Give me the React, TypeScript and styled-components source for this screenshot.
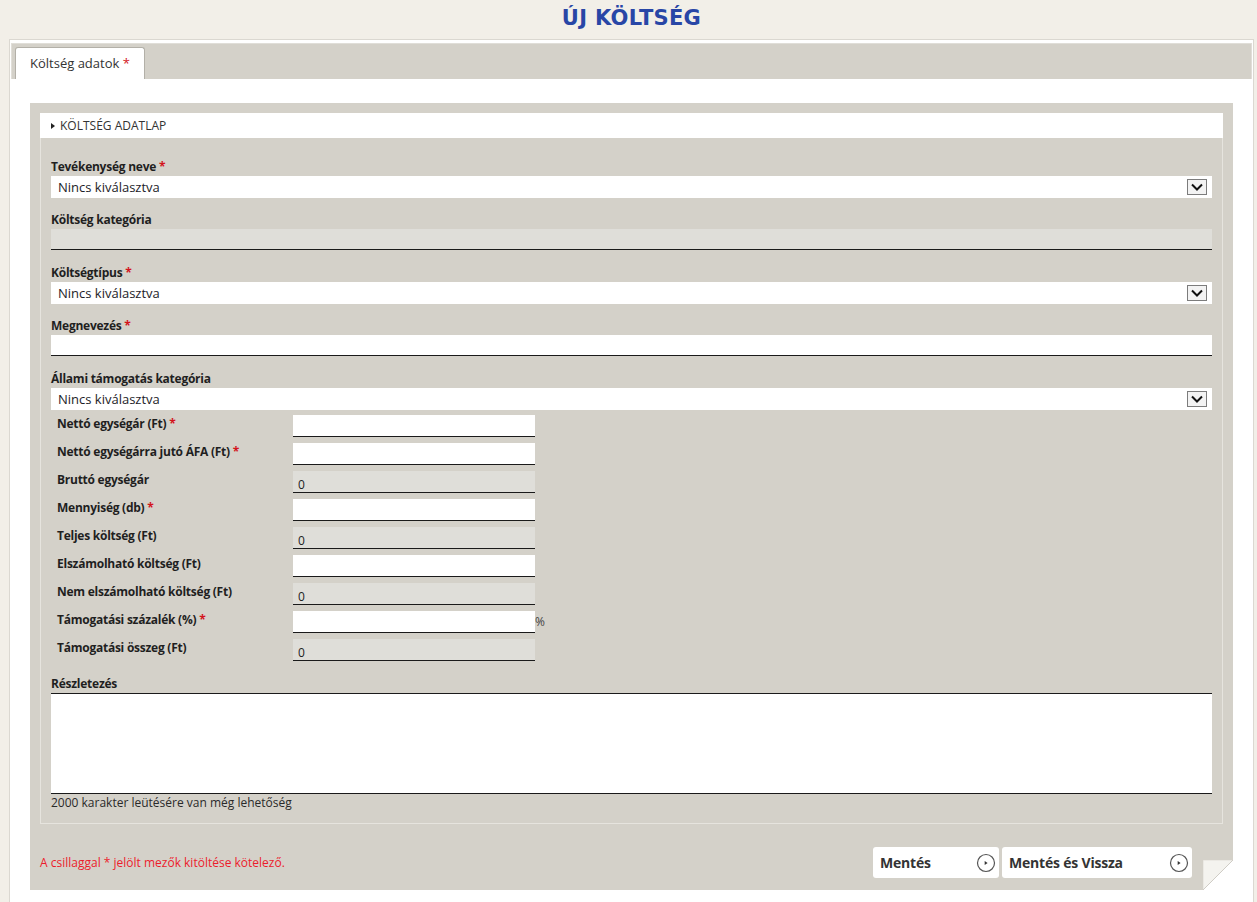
import React from "react";
import styled, { createGlobalStyle } from "styled-components";

const Global = createGlobalStyle`
  html, body { margin: 0; padding: 0; }
  body {
    background: #f2efe8;
    font-family: "Open Sans", "Liberation Sans", sans-serif;
    color: #222;
  }
  * { box-sizing: border-box; }
`;

const Page = styled.div`
  width: 1257px;
  min-height: 902px;
`;

const TitleBar = styled.div`
  height: 39px;
  display: flex;
  align-items: center;
  justify-content: center;
`;

const Title = styled.h1`
  margin: 0 0 0 6px;
  font-family: "DejaVu Sans", "Liberation Sans", sans-serif;
  font-weight: 700;
  font-size: 21px;
  color: #2846a6;
  letter-spacing: 0.3px;
  line-height: 1;
  padding-top: 1px;
  padding-bottom: 3px;
`;

const Frame = styled.div`
  margin: 0 3px 0 9px;
  border: 1px solid #dbd8d1;
  border-bottom: none;
  background: #fff;
  padding: 3px 1px 0 1px;
  min-height: 863px;
`;

const TabBar = styled.div`
  height: 36px;
  background: #d4d1c9;
  border: 1px solid #e0ded8;
  border-bottom: none;
  display: flex;
  align-items: flex-end;
  padding-left: 3px;
`;

const Tab = styled.div`
  height: 32px;
  background: #fff;
  border: 1px solid #b3b0a8;
  border-bottom: none;
  border-radius: 3px 3px 0 0;
  padding: 0 14px;
  font-size: 13px;
  line-height: 31px;
  color: #333;
`;

const Req = styled.span`
  color: #d3141c;
`;

const TabBody = styled.div`
  padding: 24px 19px 12px 19px;
`;

const Panel = styled.div`
  position: relative;
  background: #d4d1c9;
  padding: 10px;
`;

const SectionHeader = styled.div`
  height: 25px;
  background: #fff;
  display: flex;
  align-items: center;
  gap: 5px;
  padding-left: 11px;
  font-size: 12px;
  color: #333;
`;

const Caret = styled.span`
  width: 0;
  height: 0;
  border-left: 4px solid #222;
  border-top: 3.5px solid transparent;
  border-bottom: 3.5px solid transparent;
`;

const Fieldset = styled.div`
  border: 1px solid #e6e4de;
  border-top: none;
  padding: 20px 10px 11px 10px;
`;

const Field = styled.div<{ $gap?: number }>`
  margin-bottom: ${(p) => (p.$gap ?? 13)}px;
`;

const Label = styled.div`
  font-size: 12px;
  font-weight: 700;
  line-height: 18px;
  letter-spacing: -0.25px;
  color: #1f1f1f;
`;

const SelectBox = styled.div`
  height: 22px;
  background: #fff;
  display: flex;
  align-items: center;
  justify-content: space-between;
  padding: 0 5px 0 7px;
  font-size: 13px;
  color: #1c1c28;
`;

const DropBtn = styled.span`
  width: 20px;
  height: 16px;
  border: 1px solid #7c7c7c;
  background: #f3f3f3;
  display: flex;
  align-items: center;
  justify-content: center;
`;

const TextBox = styled.div<{ $readOnly?: boolean }>`
  height: 21px;
  background: ${(p) => (p.$readOnly ? "#dfded9" : "#fff")};
  border-bottom: 1.5px solid #1a1a1a;
`;

const Grid = styled.div`
  display: grid;
  grid-template-columns: 236px 242px auto;
  row-gap: 6px;
  padding-left: 6px;
  align-items: start;
`;

const GridInput = styled.div<{ $readOnly?: boolean }>`
  height: 22px;
  background: ${(p) => (p.$readOnly ? "#dfded9" : "#fff")};
  border-bottom: 1.5px solid #1a1a1a;
  padding: 7px 0 0 5px;
  font-size: 12px;
  line-height: 14px;
  color: #222;
`;

const Unit = styled.div`
  font-size: 12px;
  line-height: 22px;
  color: #444;
`;

const TextArea = styled.div`
  height: 101px;
  background: #fff;
  border-top: 1.5px solid #1a1a1a;
  border-bottom: 1.5px solid #1a1a1a;
`;

const Counter = styled.div`
  font-size: 12px;
  line-height: 18px;
  color: #2a2a2a;
`;

const Footer = styled.div`
  display: flex;
  align-items: center;
  padding: 23px 0 2px 0;
`;

const Note = styled.div`
  font-size: 12px;
  color: #ec1c2c;
`;

const Buttons = styled.div`
  margin-left: auto;
  margin-right: 31px;
  display: flex;
  gap: 3px;
`;

const Button = styled.div<{ $w: number }>`
  width: ${(p) => p.$w}px;
  height: 31px;
  background: #fff;
  border-radius: 3px;
  display: flex;
  align-items: center;
  justify-content: space-between;
  padding: 0 3px 0 7px;
  font-size: 14px;
  font-weight: 700;
  letter-spacing: -0.2px;
  color: #333;
`;

const Curl = styled.svg`
  position: absolute;
  right: 0;
  bottom: 0;
`;

const Chevron = () => (
  <svg width="14" height="10" viewBox="0 0 14 10">
    <path d="M2 2.5 L7 7.5 L12 2.5" fill="none" stroke="#111" strokeWidth="2" />
  </svg>
);

const PlayCircle = () => (
  <svg width="20" height="20" viewBox="0 0 20 20">
    <circle cx="10" cy="10" r="8.5" fill="#fff" stroke="#555" strokeWidth="1.2" />
    <path d="M8.7 8 L11.6 10 L8.7 12 Z" fill="#333" />
  </svg>
);

const Select = ({ value }: { value: string }) => (
  <SelectBox>
    <span>{value}</span>
    <DropBtn>
      <Chevron />
    </DropBtn>
  </SelectBox>
);

type Row = { label: string; req?: boolean; ro?: boolean; unit?: string };

const rows: Row[] = [
  { label: "Nettó egységár (Ft)", req: true },
  { label: "Nettó egységárra jutó ÁFA (Ft)", req: true },
  { label: "Bruttó egységár", ro: true },
  { label: "Mennyiség (db)", req: true },
  { label: "Teljes költség (Ft)", ro: true },
  { label: "Elszámolható költség (Ft)" },
  { label: "Nem elszámolható költség (Ft)", ro: true },
  { label: "Támogatási százalék (%)", req: true, unit: "%" },
  { label: "Támogatási összeg (Ft)", ro: true },
];

export default function App() {
  return (
    <>
      <Global />
      <Page>
        <TitleBar>
          <Title>ÚJ KÖLTSÉG</Title>
        </TitleBar>
        <Frame>
          <TabBar>
            <Tab>
              Költség adatok <Req>*</Req>
            </Tab>
          </TabBar>
          <TabBody>
            <Panel>
              <SectionHeader>
                <Caret />
                KÖLTSÉG ADATLAP
              </SectionHeader>
              <Fieldset>
                <Field>
                  <Label>
                    Tevékenység neve <Req>*</Req>
                  </Label>
                  <Select value="Nincs kiválasztva" />
                </Field>
                <Field $gap={14}>
                  <Label>Költség kategória</Label>
                  <TextBox $readOnly />
                </Field>
                <Field>
                  <Label>
                    Költségtípus <Req>*</Req>
                  </Label>
                  <Select value="Nincs kiválasztva" />
                </Field>
                <Field $gap={14}>
                  <Label>
                    Megnevezés <Req>*</Req>
                  </Label>
                  <TextBox />
                </Field>
                <Field $gap={5}>
                  <Label>Állami támogatás kategória</Label>
                  <Select value="Nincs kiválasztva" />
                </Field>
                <Grid>
                  {rows.map((r) => (
                    <React.Fragment key={r.label}>
                      <Label>
                        {r.label}
                        {r.req && (
                          <>
                            {" "}
                            <Req>*</Req>
                          </>
                        )}
                      </Label>
                      <GridInput $readOnly={r.ro}>{r.ro ? "0" : ""}</GridInput>
                      <Unit>{r.unit ?? ""}</Unit>
                    </React.Fragment>
                  ))}
                </Grid>
                <Field $gap={0} style={{ marginTop: 14 }}>
                  <Label>Részletezés</Label>
                  <TextArea />
                </Field>
                <Counter>2000 karakter leütésére van még lehetőség</Counter>
              </Fieldset>
              <Footer>
                <Note>A csillaggal * jelölt mezők kitöltése kötelező.</Note>
                <Buttons>
                  <Button $w={126}>
                    <span>Mentés</span>
                    <PlayCircle />
                  </Button>
                  <Button $w={190}>
                    <span>Mentés és Vissza</span>
                    <PlayCircle />
                  </Button>
                </Buttons>
              </Footer>
              <Curl width="30" height="30" viewBox="0 0 30 30">
                <polygon points="30,0 30,30 0,30" fill="#ffffff" />
                <polygon points="0,0 30,0 0,30" fill="#f4f3ef" stroke="#e2e0da" strokeWidth="1" />
                <line x1="30" y1="0" x2="0" y2="30" stroke="#cfccc5" strokeWidth="1" />
              </Curl>
            </Panel>
          </TabBody>
        </Frame>
      </Page>
    </>
  );
}
